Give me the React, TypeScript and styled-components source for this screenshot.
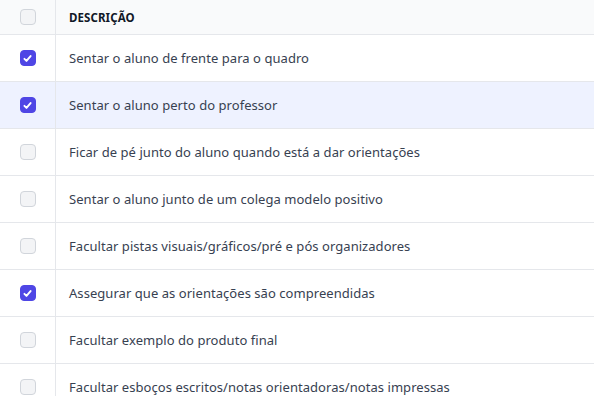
import styled, { createGlobalStyle } from "styled-components";

const GlobalStyle = createGlobalStyle`
  body {
    margin: 0;
    background: #ffffff;
    font-family: "Noto Sans", "Open Sans", sans-serif;
  }
`;

const Table = styled.div`
  width: 594px;
  display: flex;
  flex-direction: column;
`;

const HeaderRow = styled.div`
  display: grid;
  grid-template-columns: 56px 1fr;
  height: 34px;
  background: #f9fafb;
  border-bottom: 1px solid #e5e7eb;
`;

const Row = styled.div<{ $selected: boolean }>`
  display: grid;
  grid-template-columns: 56px 1fr;
  height: 46px;
  background: ${({ $selected }) => ($selected ? "#eef2ff" : "#ffffff")};
  border-bottom: 1px solid #e5e7eb;
`;

const CheckCell = styled.div`
  display: flex;
  align-items: center;
  justify-content: center;
  border-right: 1px solid #e5e7eb;
`;

const TextCell = styled.div`
  display: flex;
  align-items: center;
  padding-left: 13px;
  font-size: 13px;
  letter-spacing: 0.05px;
  color: #374151;
  white-space: nowrap;
`;

const HeaderCell = styled(TextCell)`
  font-size: 11.5px;
  font-weight: 700;
  color: #111827;
  letter-spacing: 0.1px;
`;

const Box = styled.span<{ $checked: boolean }>`
  width: 16px;
  height: 16px;
  box-sizing: border-box;
  border-radius: 4px;
  display: flex;
  align-items: center;
  justify-content: center;
  background: ${({ $checked }) => ($checked ? "#4f46e5" : "#f3f4f6")};
  border: 1px solid ${({ $checked }) => ($checked ? "#4f46e5" : "#d1d5db")};
`;

const items = [
  { text: "Sentar o aluno de frente para o quadro", checked: true },
  { text: "Sentar o aluno perto do professor", checked: true, selected: true },
  { text: "Ficar de pé junto do aluno quando está a dar orientações", checked: false },
  { text: "Sentar o aluno junto de um colega modelo positivo", checked: false },
  { text: "Facultar pistas visuais/gráficos/pré e pós organizadores", checked: false },
  { text: "Assegurar que as orientações são compreendidas", checked: true },
  { text: "Facultar exemplo do produto final", checked: false },
  { text: "Facultar esboços escritos/notas orientadoras/notas impressas", checked: false },
];

const Checkbox = ({ checked }: { checked: boolean }) => (
  <Box $checked={checked}>
    {checked && (
      <svg width="11" height="11" viewBox="0 0 16 16" fill="none">
        <path d="M3.5 8.5l3 3 6-7" stroke="#fff" strokeWidth="2.8" strokeLinecap="round" strokeLinejoin="round" />
      </svg>
    )}
  </Box>
);

const App = () => {
  return (
    <>
      <GlobalStyle />
      <Table>
        <HeaderRow>
          <CheckCell>
            <Checkbox checked={false} />
          </CheckCell>
          <HeaderCell>DESCRIÇÃO</HeaderCell>
        </HeaderRow>
        {items.map((item) => (
          <Row key={item.text} $selected={!!item.selected}>
            <CheckCell>
              <Checkbox checked={item.checked} />
            </CheckCell>
            <TextCell>{item.text}</TextCell>
          </Row>
        ))}
      </Table>
    </>
  );
};

export default App;
